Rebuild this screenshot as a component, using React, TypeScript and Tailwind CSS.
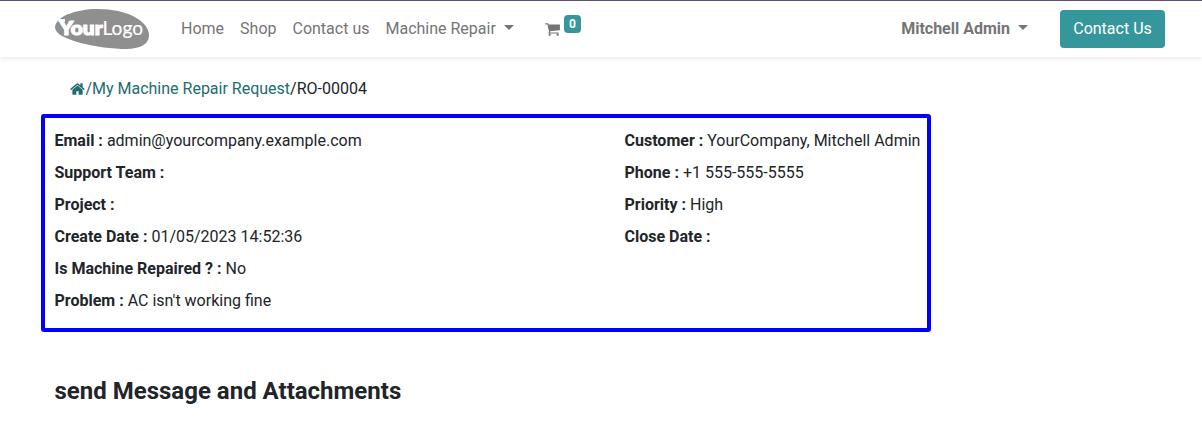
import React from "react";

const Caret = () => (
  <span className="mb-[3px] ml-2 h-0 w-0 border-x-[5px] border-t-[5px] border-x-transparent border-t-current" />
);

const Logo = () => (
  <svg className="h-10 w-[95px]" viewBox="0 0 95 40">
    <path
      d="M0 18.5C0 8 20 0 43 0C72 0 94 12 94 26.5C94 35 85 40 71 40C45 40 0 31 0 18.5Z"
      fill="#8f8f8f"
    />
    <path d="M3 10H10V13H5.5L3.5 12Z" fill="#fff" />
    <text x="4.5" y="25.5" textLength="43" lengthAdjust="spacingAndGlyphs" fill="#fff" stroke="#fff" strokeWidth="1.2" className="font-['Lato',sans-serif] text-[19px] font-black">
      Your
    </text>
    <text x="47.5" y="25.5" textLength="40.5" lengthAdjust="spacingAndGlyphs" fill="#fff" stroke="#fff" strokeWidth="0.2" className="font-['Lato',sans-serif] text-[19.5px] font-normal">
      Logo
    </text>
  </svg>
);

const CartIcon = () => (
  <svg className="mb-px h-4 w-[15px]" viewBox="64 0 1664 1792" fill="currentColor">
    <path d="M704 1536q0 52-38 90t-90 38-90-38-38-90 38-90 90-38 90 38 38 90zm896 0q0 52-38 90t-90 38-90-38-38-90 38-90 90-38 90 38 38 90zm128-1088v512q0 24-16.5 42.5t-40.5 21.5l-1044 122q13 60 13 70 0 16-24 64h920q26 0 45 19t19 45-19 45-45 19h-1024q-26 0-45-19t-19-45q0-11 8-31.5t16-36 21.5-40 15.5-29.5l-177-823h-204q-26 0-45-19t-19-45 19-45 45-19h256q16 0 28.5 6.5t19.5 15.5 13 24.5 8 26 5.5 29.5 4.5 26h1201q26 0 45 19t19 45z" />
  </svg>
);

const HomeIcon = () => (
  <svg className="h-4 w-[15px]" viewBox="64 0 1664 1792" fill="currentColor">
    <path d="M1472 992v480q0 26-19 45t-45 19h-384v-384h-256v384h-384q-26 0-45-19t-19-45v-480q0-1 .5-3t.5-3l575-474 575 474q1 2 1 6zm223-69l-62 74q-8 9-21 11h-3q-13 0-21-7l-692-577-692 577q-12 8-24 7-13-2-21-11l-62-74q-8-10-7-23.5t11-21.5l719-599q32-26 76-26t76 26l244 204v-195q0-14 9-23t23-9h192q14 0 23 9t9 23v408l219 182q10 8 11 21.5t-7 23.5z" />
  </svg>
);

const left = [
  ["Email :", "admin@yourcompany.example.com"],
  ["Support Team :", ""],
  ["Project :", ""],
  ["Create Date :", "01/05/2023 14:52:36"],
  ["Is Machine Repaired ? :", "No"],
  ["Problem :", "AC isn't working fine"],
];

const right = [
  ["Customer :", "YourCompany, Mitchell Admin"],
  ["Phone :", "+1 555-555-5555"],
  ["Priority :", "High"],
  ["Close Date :", ""],
];

const Fields = ({ rows }: { rows: string[][] }) => (
  <dl className="flex flex-col gap-2">
    {rows.map(([label, value]) => (
      <div key={label} className="flex h-6 gap-1 whitespace-nowrap">
        <dt className="font-bold">{label}</dt>
        <dd>{value}</dd>
      </div>
    ))}
  </dl>
);

export default function App() {
  return (
    <div className="h-[428px] overflow-hidden bg-white font-['Roboto',sans-serif] text-base leading-6 text-[#212529]">
      <header className="flex h-[57px] items-center border-t border-[#5f4f7f] pr-[37px] pl-[55px] text-[#757575] shadow-[0_2px_4px_rgba(0,0,0,0.075)]">
        <Logo />
        <nav className="ml-[31px] flex items-center gap-4 whitespace-nowrap">
          <a>Home</a>
          <a>Shop</a>
          <a>Contact us</a>
          <a className="flex items-center">
            Machine Repair
            <Caret />
          </a>
        </nav>
        <a className="ml-[31.5px] flex items-center">
          <CartIcon />
          <span className="mb-[10px] ml-[3.5px] flex h-[18px] w-[17px] items-center justify-center rounded-[4px] bg-[#35979c] text-xs font-bold text-white">
            0
          </span>
        </a>
        <a className="ml-auto flex items-center font-bold">
          Mitchell Admin
          <Caret />
        </a>
        <button className="ml-8 h-[38px] w-[105px] rounded-[4px] bg-[#35979c] text-white">
          Contact Us
        </button>
      </header>
      <main>
        <div className="flex h-[57px] items-center pt-[6px] pl-[70.4px]">
          <span className="flex items-center text-[#226c6f]">
            <HomeIcon />/My Machine Repair Request
          </span>
          <span>/RO-00004</span>
        </div>
        <section className="ml-[41px] grid h-[218px] w-[890px] grid-cols-[570px_1fr] rounded-[3px] border-4 border-[#0000ff] pt-[11px] pl-[9.5px]">
          <Fields rows={left} />
          <Fields rows={right} />
        </section>
        <h2 className="mt-[45px] pl-[54.5px] text-2xl leading-[29px] font-bold">
          send Message and Attachments
        </h2>
      </main>
    </div>
  );
}
